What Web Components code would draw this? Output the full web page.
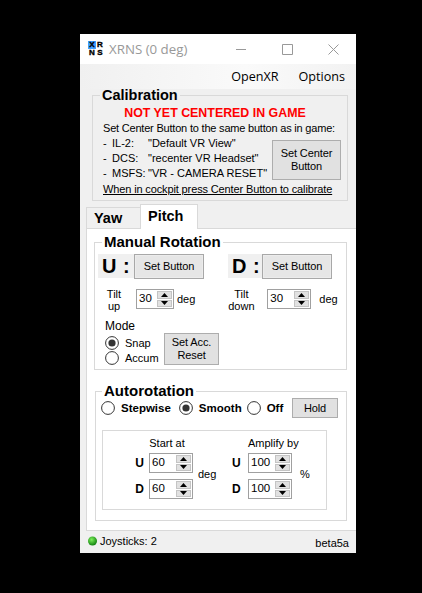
<!DOCTYPE html>
<html>
<head>
<meta charset="utf-8">
<title>XRNS</title>
<style>
  html, body { margin: 0; background: #000; height: 100%; overflow: hidden; }
  body { padding: 34px 0 0 80px; box-sizing: border-box; font: 11px "Liberation Sans", Arial, sans-serif; }
</style>
</head>
<body>
<xr-window></xr-window>
<script>
const FRAME = '#d9d9d9'

/**
 * Base class, sets a shadow root from the string a subclass returns.
 */
class Base extends HTMLElement {
  constructor () {
    super()
    this.attachShadow({ mode: 'open' })
    this.shadowRoot.innerHTML = this.render()
  }

  render () {
    return '<slot></slot>'
  }
}

/**
 * Winforms like push button.
 */
class XrButton extends Base {
  render () {
    return `<style>
      :host { display: flex; align-items: center; justify-content: center; box-sizing: border-box;
        width: var(--w, 70px); height: var(--h, 24px); flex: none; text-align: center;
        font: 11px/13px "Liberation Sans", Arial, sans-serif; color: #000; letter-spacing: -0.1px;
        background: #e1e1e1; border: 1px solid #adadad; }
      :host([inset]) { box-shadow: inset 0 0 0 1px #ececec; background: #e6e6e6; border-color: #a8a8a8; }
    </style><slot></slot>`
  }
}

/**
 * Round radio button with a label.
 */
class XrRadio extends Base {
  render () {
    const on = this.hasAttribute('checked')
    return `<style>
      :host { display: flex; align-items: center; gap: var(--gap, 6px); height: 15px; color: #000; flex: none; }
      svg { flex: none; display: block; }
    </style>
    <svg width="14" height="14" viewBox="0 0 14 14">
      <circle cx="7" cy="7" r="6.4" fill="#fff" stroke="#333" stroke-width="1"/>
      ${on ? '<circle cx="7" cy="7" r="3.6" fill="#333"/>' : ''}
    </svg><span><slot></slot></span>`
  }
}

/**
 * Numeric up down box.
 */
class XrSpin extends Base {
  render () {
    return `<style>
      :host { display: flex; box-sizing: border-box; width: var(--w, 44px); height: 20px; flex: none;
        background: #fff; border: 1px solid #a0a0a0; padding: 1px; }
      span { flex: 1; font: 11.5px/15px "Liberation Sans", Arial, sans-serif; color: #000; padding-left: 1px; }
      div { width: 15px; display: flex; flex-direction: column; gap: 1px; }
      i { flex: 1; display: flex; align-items: center; justify-content: center; background: #e1e1e1; border: 1px solid #c4c4c4; }
      svg { display: block; }
    </style>
    <span>${this.getAttribute('value')}</span>
    <div>
      <i><svg width="7" height="4" viewBox="0 0 7 4"><path d="M3.5 0 7 4H0z" fill="#000"/></svg></i>
      <i><svg width="7" height="4" viewBox="0 0 7 4"><path d="M0 0h7L3.5 4z" fill="#000"/></svg></i>
    </div>`
  }
}

/**
 * Group box with a bold legend on its top border.
 */
class XrGroup extends Base {
  render () {
    return `<style>
      :host { display: block; }
      fieldset { margin: 0; padding: 0; min-width: 0; border: 1px solid ${FRAME}; }
      legend { margin-left: var(--legend-left, 7px); padding: 0 2px; font: bold var(--legend-size, 15px)/12px "Liberation Sans", Arial, sans-serif; color: #000; }
    </style>
    <fieldset><legend>${this.getAttribute('label')}</legend><slot></slot></fieldset>`
  }
}

/**
 * Title bar with the logo and the three window buttons.
 */
class XrTitlebar extends Base {
  render () {
    return `<style>
      :host { display: flex; align-items: center; height: 30px; background: #fff; padding-left: 8px; }
      .logo { width: 16px; height: 16px; flex: none; display: grid; grid-template-columns: 1fr 1fr; grid-auto-rows: 8px;
        font: bold 8px/8px "Liberation Sans", Arial, sans-serif; text-align: center; color: #000; background: #fff;
        -webkit-text-stroke: 0.4px #000; }
      .logo .x { background: #3f9fff; }
      h1 { margin: 0 0 0 5px; flex: 1; font: 13.3px "Open Sans", sans-serif; color: #999; }
      .ctl { width: 46px; flex: none; display: flex; justify-content: center; }
      svg { display: block; }
    </style>
    <div class="logo"><span class="x">X</span><span>R</span><span>N</span><span>S</span></div>
    <h1>XRNS (0 deg)</h1>
    <div class="ctl"><svg width="10" height="10"><path d="M0 5.5h10" stroke="#999"/></svg></div>
    <div class="ctl"><svg width="11" height="11"><path d="M.5.5h10v10H.5z" fill="none" stroke="#999"/></svg></div>
    <div class="ctl"><svg width="11" height="11"><path d="M.5.5l10 10M10.5.5l-10 10" stroke="#999"/></svg></div>`
  }
}

/**
 * Menu strip.
 */
class XrMenu extends Base {
  render () {
    return `<style>
      :host { display: flex; justify-content: flex-end; gap: 20px; align-items: center; height: 25px; padding-right: 11px;
        background: linear-gradient(to right, #f0f0f0, #fafafa 60%, #f2f2f2);
        font: 12.6px "Open Sans", sans-serif; color: #000; }
    </style><span>OpenXR</span><span>Options</span>`
  }
}

/**
 * The calibration group.
 */
class XrCalibration extends Base {
  render () {
    return `<style>
      :host { display: block; margin: 0 8px 0 12px; --legend-size: 14.5px; }
      .body { padding: 4px 6px 3px 10px; }
      .red { font: bold 12.4px/16px "Liberation Sans", Arial, sans-serif; color: #f00; text-align: center; padding-right: 14px; white-space: nowrap; }
      .line { line-height: 15px; white-space: nowrap; letter-spacing: -0.2px; }
      .mid { display: flex; justify-content: space-between; align-items: flex-start; height: 45px; }
      .games { display: grid; grid-template-columns: 9px 36px auto; grid-auto-rows: 15px; line-height: 15px; white-space: nowrap; }
      u { display: block; margin-top: 1px; line-height: 15px; white-space: nowrap; letter-spacing: -0.13px; }
      xr-button { --w: 69px; --h: 40px; margin-top: 4px; }
    </style>
    <xr-group label="Calibration"><div class="body">
      <div class="red">NOT YET CENTERED IN GAME</div>
      <div class="line">Set Center Button to the same button as in game:</div>
      <div class="mid">
        <div class="games">
          <span>-</span><span>IL-2:</span><span>"Default VR View"</span>
          <span>-</span><span>DCS:</span><span>"recenter VR Headset"</span>
          <span>-</span><span>MSFS:</span><span>"VR - CAMERA RESET"</span>
        </div>
        <xr-button>Set Center<br>Button</xr-button>
      </div>
      <u>When in cockpit press Center Button to calibrate</u>
    </div></xr-group>`
  }
}

/**
 * Yaw and Pitch tab headers.
 */
class XrTabs extends Base {
  render () {
    return `<style>
      :host { display: flex; align-items: flex-end; height: 27px; margin: 0 0 0 6px; position: relative; z-index: 1; }
      div { box-sizing: border-box; font: bold 14.5px "Liberation Sans", Arial, sans-serif; border: 1px solid ${FRAME}; color: #000; }
      .off { width: 54px; height: 21px; padding: 2px 0 0 7px; border-right: 0; border-bottom: 0; background: #f0f0f0; }
      .on { width: 58px; height: 25px; margin-bottom: -1px; padding: 3px 0 0 7px; border-bottom: 0; background: #fff; }
    </style><div class="off">Yaw</div><div class="on">Pitch</div>`
  }
}

/**
 * Manual rotation group of the Pitch tab.
 */
class XrManual extends Base {
  render () {
    return `<style>
      :host { display: block; margin: 7px 9px 0 7px; }
      .body { padding: 6px 0 4px 3px; }
      .row { display: flex; align-items: center; }
      .big { background: #f0f0f0; font: bold 20px/24px "Liberation Sans", Arial, sans-serif; flex: none; height: 24px; padding-left: 4px; box-sizing: border-box; letter-spacing: 0.5px; white-space: nowrap; overflow: hidden; align-self: flex-start; }
      .u { width: 36px; }
      .d { width: 34px; margin-left: 24px; }
      xr-button { --h: 25px; }
      .tilt { margin-top: 7px; height: 26px; }
      .two { line-height: 12px; text-align: center; flex: none; padding-top: 1px; }
      .deg { flex: none; }
      .mode { display: flex; margin-top: 7px; padding-left: 7px; }
      .mode h3 { margin: 0 0 1px; font: normal 12px/15px "Liberation Sans", Arial, sans-serif; }
      .radios { width: 59px; flex: none; }
      .acc { --w: 55px; --h: 32px; margin-top: 14px; }
    </style>
    <xr-group label="Manual Rotation"><div class="body">
      <div class="row">
        <span class="big u">U :</span><xr-button inset>Set Button</xr-button>
        <span class="big d">D :</span><xr-button inset>Set Button</xr-button>
      </div>
      <div class="row tilt">
        <span class="two" style="width:26px;margin-left:3px">Tilt<br>up</span>
        <xr-spin value="30" style="--w:38px;margin-left:9px"></xr-spin>
        <span class="deg" style="margin-left:3px">deg</span>
        <span class="two" style="width:30px;margin-left:31px">Tilt<br>down</span>
        <xr-spin value="30" style="--w:44px;margin-left:11px"></xr-spin>
        <span class="deg" style="margin-left:8px">deg</span>
      </div>
      <div class="mode">
        <div class="radios">
          <h3>Mode</h3>
          <xr-radio checked>Snap</xr-radio>
          <xr-radio>Accum</xr-radio>
        </div>
        <xr-button class="acc">Set Acc.<br>Reset</xr-button>
      </div>
    </div></xr-group>`
  }
}

/**
 * Autorotation group of the Pitch tab.
 */
class XrAuto extends Base {
  render () {
    return `<style>
      :host { display: block; margin: 15px 9px 0 8px; --legend-left: 6px; }
      .body { padding: 1px 8px 10px 5px; }
      .row { display: flex; align-items: center; font: bold 11.5px "Liberation Sans", Arial, sans-serif; }
      xr-button { --w: 46px; --h: 20px; margin-left: auto; font-weight: normal; }
      .box { margin: 12px 11px 0 1px; border: 1px solid ${FRAME}; height: 80px; box-sizing: border-box;
        display: grid; grid-template-columns: 32px 44px 39px 16px 44px auto; grid-template-rows: 14px 26px 26px;
        padding: 5px 0 0 14px; align-items: center; }
      .h { text-align: center; white-space: nowrap; }
      .k { font: bold 12px "Liberation Sans", Arial, sans-serif; }
      .left { text-align: right; padding-right: 5px; }
    </style>
    <xr-group label="Autorotation"><div class="body">
      <div class="row">
        <xr-radio>Stepwise</xr-radio>
        <xr-radio checked style="margin-left:8px">Smooth</xr-radio>
        <xr-radio style="margin-left:5px">Off</xr-radio>
        <xr-button>Hold</xr-button>
      </div>
      <div class="box">
        <span class="h" style="grid-column:2;grid-row:1;padding-right:8px">Start at</span>
        <span class="h" style="grid-column:5;grid-row:1">Amplify by</span>
        <span class="k left" style="grid-column:1;grid-row:2">U</span><xr-spin value="60" style="grid-column:2;grid-row:2"></xr-spin>
        <span style="grid-column:3;grid-row:2/span 2;padding:0 0 4px 5px">deg</span>
        <span class="k" style="grid-column:4;grid-row:2">U</span><xr-spin value="100" style="grid-column:5;grid-row:2"></xr-spin>
        <span style="grid-column:6;grid-row:2/span 2;padding:0 0 4px 8px">%</span>
        <span class="k left" style="grid-column:1;grid-row:3">D</span><xr-spin value="60" style="grid-column:2;grid-row:3"></xr-spin>
        <span class="k" style="grid-column:4;grid-row:3">D</span><xr-spin value="100" style="grid-column:5;grid-row:3"></xr-spin>
      </div>
    </div></xr-group>`
  }
}

/**
 * Tab page, white panel under the tabs.
 */
class XrPanel extends Base {
  render () {
    return `<style>
      :host { display: block; margin-left: 6px; height: 303px; box-sizing: border-box; background: #fff;
        border: 1px solid ${FRAME}; border-right: 0; overflow: hidden; }
    </style><slot></slot>`
  }
}

/**
 * Status bar with led, joystick count and version.
 */
class XrStatus extends Base {
  render () {
    return `<style>
      :host { display: flex; align-items: center; height: 22px; box-sizing: border-box; padding: 0 7px 2px 8px; background: #f0f0f0; color: #000; font-size: 11px; }
      svg { display: block; margin-right: 3px; }
      .v { margin-left: auto; padding-top: 4px; }
    </style>
    <svg width="9" height="10" viewBox="0 0 9 10">
      <defs><radialGradient id="led" cx="0.4" cy="0.35" r="0.7"><stop offset="0" stop-color="#7cf05a"/><stop offset="1" stop-color="#0a7a0a"/></radialGradient></defs>
      <circle cx="4.5" cy="5" r="4.5" fill="url(#led)"/>
    </svg>
    <span>Joysticks: 2</span><span class="v">beta5a</span>`
  }
}

/**
 * Whole application window.
 */
class XrWindow extends Base {
  render () {
    return `<style>
      :host { display: block; width: 276px; height: 519px; background: #f0f0f0; overflow: hidden; }
    </style>
    <xr-titlebar></xr-titlebar>
    <xr-menu></xr-menu>
    <xr-calibration></xr-calibration>
    <xr-tabs></xr-tabs>
    <xr-panel><xr-manual></xr-manual><xr-auto></xr-auto></xr-panel>
    <xr-status></xr-status>`
  }
}

customElements.define('xr-button', XrButton)
customElements.define('xr-radio', XrRadio)
customElements.define('xr-spin', XrSpin)
customElements.define('xr-group', XrGroup)
customElements.define('xr-titlebar', XrTitlebar)
customElements.define('xr-menu', XrMenu)
customElements.define('xr-calibration', XrCalibration)
customElements.define('xr-tabs', XrTabs)
customElements.define('xr-manual', XrManual)
customElements.define('xr-auto', XrAuto)
customElements.define('xr-panel', XrPanel)
customElements.define('xr-status', XrStatus)
customElements.define('xr-window', XrWindow)
</script>
</body>
</html>
